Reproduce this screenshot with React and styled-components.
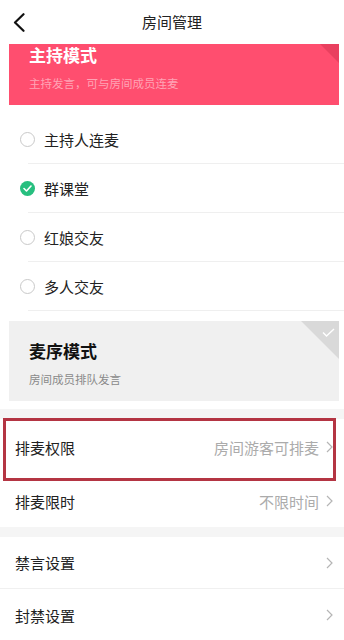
import React from 'react';
import styled, { createGlobalStyle } from 'styled-components';

const GlobalStyle = createGlobalStyle`
  html, body {
    margin: 0;
    padding: 0;
    background: #fff;
  }
  body {
    font-family: "Noto Sans CJK SC", "Noto Sans", sans-serif;
    color: #222;
  }
`;

const Page = styled.div`
  width: 344px;
  height: 640px;
  display: flex;
  flex-direction: column;
  overflow: hidden;
  background: #fff;
`;

const Header = styled.header`
  height: 44px;
  flex-shrink: 0;
  display: grid;
  grid-template-columns: 44px 1fr 44px;
  align-items: center;
  background: #fff;
  position: relative;
  z-index: 2;
`;

const BackButton = styled.button`
  border: none;
  background: transparent;
  padding: 0 0 0 13px;
  height: 44px;
  display: flex;
  align-items: center;
  cursor: pointer;
`;

const Title = styled.h1`
  margin: 0;
  text-align: center;
  font-size: 15px;
  font-weight: 400;
  color: #222;
  line-height: 44px;
`;

const ScrollBody = styled.div`
  flex: 1;
  overflow: hidden;
`;

// page is scrolled a little, the first card sits partly under the header
const Content = styled.div`
  margin-top: -19px;
`;

const ModeCard = styled.div`
  position: relative;
  overflow: hidden;
  height: 80px;
  box-sizing: border-box;
  margin: 0 5px 0 9px;
  padding: 20px 20px 0;
  background: ${(p) => (p.$active ? '#ff4e6f' : '#f0f0f0')};
`;

const CardTitle = styled.div`
  font-size: 17px;
  font-weight: 700;
  line-height: 20px;
  color: ${(p) => (p.$active ? '#fff' : '#111')};
`;

const CardSub = styled.div`
  margin-top: 10px;
  font-size: 11.5px;
  line-height: 16px;
  color: ${(p) => (p.$active ? '#ffa3b5' : '#8a8a8a')};
`;

const Corner = styled.div`
  position: absolute;
  top: 0;
  right: 0;
  width: 38px;
  height: 38px;
  background: ${(p) => (p.$active ? '#e9405f' : '#d9d9d9')};
  clip-path: polygon(0 0, 100% 0, 100% 100%);
  svg {
    position: absolute;
    top: 7px;
    right: 4px;
  }
`;

const OptionList = styled.div`
  margin: 10px 0;
`;

const OptionRow = styled.div`
  position: relative;
  height: 49px;
  display: flex;
  align-items: center;
  gap: 9px;
  padding-left: 20px;
  &::after {
    content: '';
    position: absolute;
    left: 28px;
    right: 0;
    bottom: 0;
    height: 1px;
    background: #efefef;
  }
`;

const RadioRing = styled.span`
  width: 15px;
  height: 15px;
  box-sizing: border-box;
  border-radius: 50%;
  border: ${(p) => (p.$checked ? 'none' : '1.5px solid #c9c9c9')};
  background: ${(p) => (p.$checked ? '#27bf7f' : '#fff')};
  display: flex;
  align-items: center;
  justify-content: center;
`;

const OptionLabel = styled.span`
  font-size: 15px;
  color: #222;
`;

const Spacer = styled.div`
  height: 8px;
`;

const Gap = styled.div`
  height: 10px;
  background: #f5f5f5;
`;

const SettingRow = styled.div`
  position: relative;
  height: ${(p) => p.$h || 52}px;
  display: flex;
  align-items: center;
  justify-content: space-between;
  padding: 0 11px 0 15px;
  background: #fff;
  border-bottom: ${(p) => (p.$line ? '1px solid #f0f0f0' : 'none')};
  box-sizing: border-box;
`;

const SettingLabel = styled.span`
  font-size: 15px;
  color: #222;
`;

const SettingValue = styled.span`
  display: flex;
  align-items: center;
  gap: 7px;
  font-size: 15px;
  color: #ababab;
`;

const Highlight = styled.div`
  position: absolute;
  top: -1px;
  left: 3px;
  right: 8px;
  bottom: -6px;
  border: 3px solid #b43543;
  pointer-events: none;
  z-index: 1;
`;

function BackIcon() {
  return (
    <svg width="12" height="19" viewBox="0 0 12 19">
      <path d="M10.5 1.2 L2 9.5 L10.5 17.8" fill="none" stroke="#111" strokeWidth="2.2" strokeLinecap="round" strokeLinejoin="round" />
    </svg>
  );
}

function Chevron() {
  return (
    <svg width="7" height="12" viewBox="0 0 7 12">
      <path d="M1 1 L6 6 L1 11" fill="none" stroke="#b5b5b5" strokeWidth="1.2" />
    </svg>
  );
}

function Radio({ checked }) {
  return (
    <RadioRing $checked={checked}>
      {checked && (
        <svg width="9" height="7" viewBox="0 0 9 7">
          <path d="M1 3.5 L3.5 6 L8 1" fill="none" stroke="#fff" strokeWidth="1.6" strokeLinecap="round" strokeLinejoin="round" />
        </svg>
      )}
    </RadioRing>
  );
}

const options = [
  { label: '主持人连麦', checked: false },
  { label: '群课堂', checked: true },
  { label: '红娘交友', checked: false },
  { label: '多人交友', checked: false },
];

function Card({ title, sub, active }) {
  return (
    <ModeCard $active={active}>
      <CardTitle $active={active}>{title}</CardTitle>
      <CardSub $active={active}>{sub}</CardSub>
      <Corner $active={active}>
        <svg width="13" height="9" viewBox="0 0 13 9">
          <path d="M1 4.5 L4.5 8 L12 1" fill="none" stroke="#fff" strokeWidth="1.4" />
        </svg>
      </Corner>
    </ModeCard>
  );
}

export default function App() {
  return (
    <Page>
      <GlobalStyle />
      <Header>
        <BackButton aria-label="返回">
          <BackIcon />
        </BackButton>
        <Title>房间管理</Title>
        <span />
      </Header>
      <ScrollBody>
        <Content>
          <Card active title="主持模式" sub="主持发言，可与房间成员连麦" />
          <OptionList>
            {options.map((o) => (
              <OptionRow key={o.label}>
                <Radio checked={o.checked} />
                <OptionLabel>{o.label}</OptionLabel>
              </OptionRow>
            ))}
          </OptionList>
          <Card title="麦序模式" sub="房间成员排队发言" />
          <Spacer />
          <Gap />
          <SettingRow $h={56}>
            <SettingLabel>排麦权限</SettingLabel>
            <SettingValue>
              房间游客可排麦
              <Chevron />
            </SettingValue>
            <Highlight />
          </SettingRow>
          <SettingRow>
            <SettingLabel>排麦限时</SettingLabel>
            <SettingValue>
              不限时间
              <Chevron />
            </SettingValue>
          </SettingRow>
          <Gap />
          <SettingRow $line>
            <SettingLabel>禁言设置</SettingLabel>
            <SettingValue>
              <Chevron />
            </SettingValue>
          </SettingRow>
          <SettingRow>
            <SettingLabel>封禁设置</SettingLabel>
            <SettingValue>
              <Chevron />
            </SettingValue>
          </SettingRow>
        </Content>
      </ScrollBody>
    </Page>
  );
}
